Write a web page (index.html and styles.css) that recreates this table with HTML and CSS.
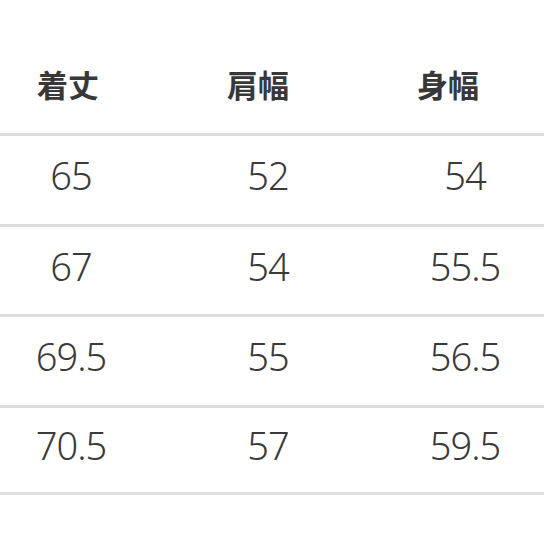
FILE: index.html
```html
<!DOCTYPE html>
<html lang="ja">
<head>
<meta charset="utf-8">
<link rel="stylesheet" href="styles.css">
</head>
<body>
<div class="table">
  <div class="head">
    <div class="h">着丈</div>
    <div class="h">肩幅</div>
    <div class="h">身幅</div>
  </div>
  <div class="row"><div>65</div><div>52</div><div>54</div></div>
  <div class="row"><div>67</div><div>54</div><div>55.5</div></div>
  <div class="row"><div>69.5</div><div>55</div><div>56.5</div></div>
  <div class="row"><div>70.5</div><div>57</div><div>59.5</div></div>
</div>
</body>
</html>
```
FILE: styles.css
```css
html, body {
  margin: 0;
  padding: 0;
  background: #fff;
}
.table {
  width: 544px;
  font-family: "Noto Sans CJK JP", "Noto Sans", sans-serif;
  color: #3a3a3a;
}
.head {
  display: grid;
  grid-template-columns: 136px 244px 136px;
  height: 133px;
  align-items: center;
  padding-top: 33px;
  box-sizing: border-box;
  font-size: 31px;
  font-weight: 700;
  text-align: center;
  color: #383838;
  line-height: 1;
}
.row {
  display: grid;
  grid-template-columns: 142px 252px 142px;
  height: 90.5px;
  box-sizing: border-box;
  border-top: 3px solid #dddddd;
  align-items: center;
  padding-bottom: 9px;
  text-align: center;
  font-size: 38px;
  font-weight: 300;
  letter-spacing: -1px;
  font-family: "Noto Sans", sans-serif;
  line-height: 1;
}
.row:last-child {
  border-bottom: 3px solid #dddddd;
}
```
